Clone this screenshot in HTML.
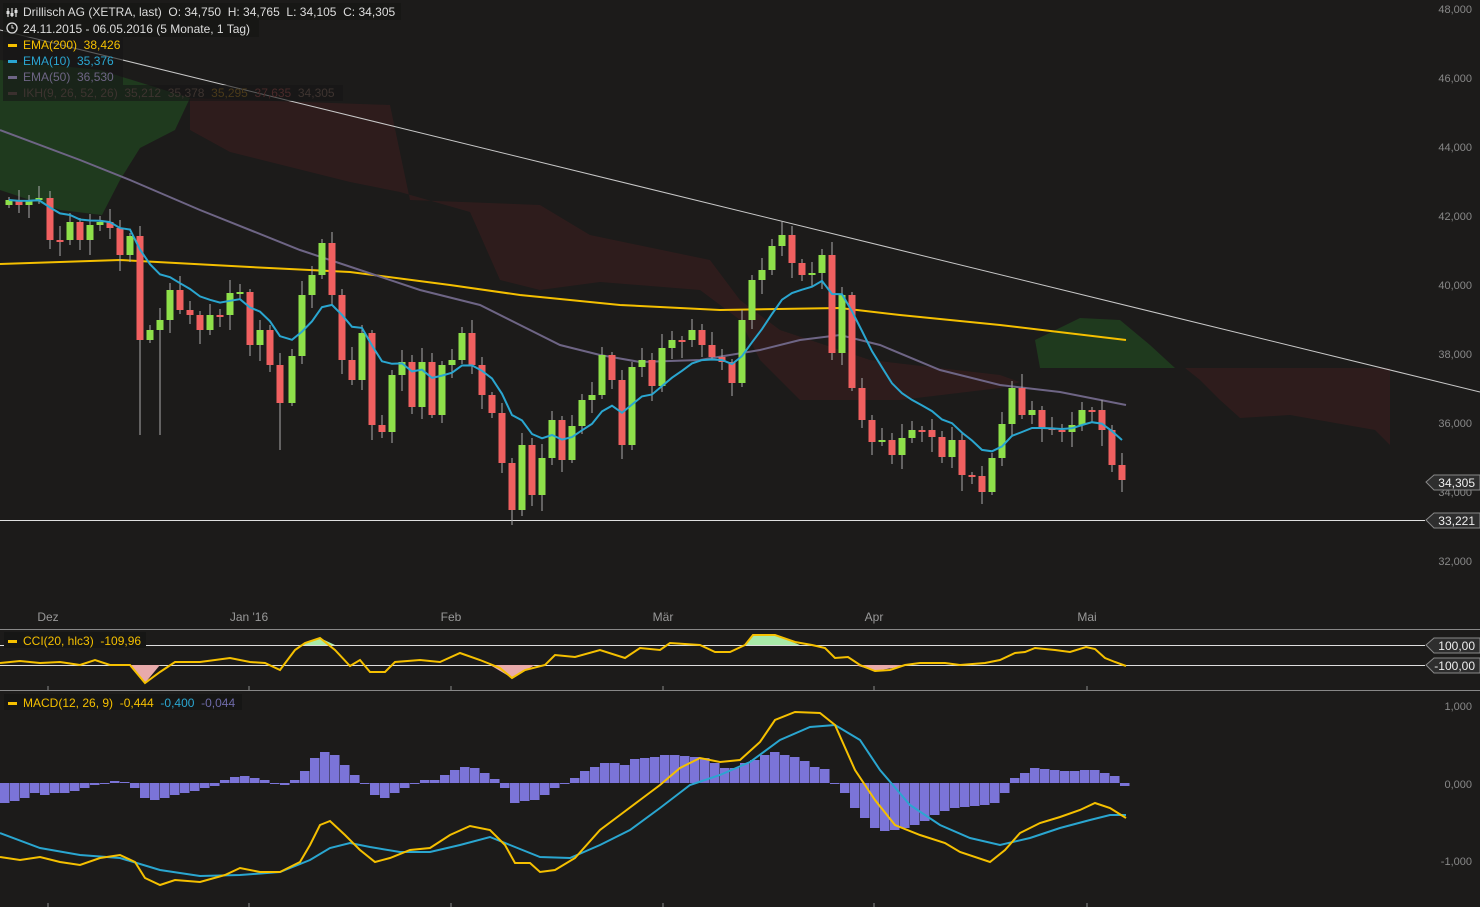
<!DOCTYPE html><html><head><meta charset="utf-8"><style>
html,body{margin:0;background:#1c1b1a;overflow:hidden}
svg{display:block;font-family:"Liberation Sans",sans-serif}
text{white-space:pre}
</style></head><body>
<svg id="s" width="1480" height="907" xmlns="http://www.w3.org/2000/svg">
<rect width="1480" height="907" fill="#1c1b1a"/>
<g id="cloud">
<polygon fill="#1f3a1e" points="0,60 100,70 190,98 175,130 140,148 120,180 102,215 60,210 0,190"/>
<polygon fill="#2e1c1c" points="190,98 390,105 410,200 540,205 590,235 710,260 740,300 780,330 870,360 1000,375 1020,382 1000,388 900,400 800,400 760,360 740,320 700,290 600,282 540,290 500,280 470,212 400,192 350,182 230,152 190,130"/>
<polygon fill="#1f3a1e" points="1035,340 1080,318 1120,320 1150,345 1175,368 1040,368"/>
<polygon fill="#2e1c1c" points="1185,368 1390,368 1390,445 1375,430 1290,415 1240,418 1220,400 1200,380"/>
</g>
<line x1="0" y1="30" x2="1480" y2="392" stroke="#c8c8c8" stroke-width="1"/>
<line x1="0" y1="520.5" x2="1425" y2="520.5" stroke="#e0e0e0" stroke-width="1"/>
<polyline fill="none" stroke="#f5c000" stroke-width="2" points="0,264 120,260 250,267 350,272 450,285 520,295 620,305 720,310 840,308 900,315 1000,325 1126,340"/>
<polyline fill="none" stroke="#6e6585" stroke-width="2" points="0,130 80,160 130,180 200,210 300,250 360,270 420,290 480,305 520,325 560,345 600,355 640,362 700,360 760,350 800,340 840,335 880,345 940,370 1000,385 1060,392 1126,405"/>
<g id="candles"></g>
<polyline id="ema10" fill="none" stroke="#2aa6d0" stroke-width="2"/>
<g fill="#888" font-size="11" text-anchor="end">
<text x="1472" y="13">48,000</text><text x="1472" y="82">46,000</text><text x="1472" y="151">44,000</text><text x="1472" y="220">42,000</text><text x="1472" y="289">40,000</text><text x="1472" y="358">38,000</text><text x="1472" y="427">36,000</text><text x="1472" y="496">34,000</text><text x="1472" y="565">32,000</text>
</g>
<g fill="#2e2e2e" stroke="#888"><polygon points="1426,482 1434,475 1480,475 1480,490 1434,490"/><polygon points="1426,520 1434,513 1480,513 1480,528 1434,528"/>
<polygon points="1426,645 1434,638 1480,638 1480,653 1434,653"/><polygon points="1426,665 1434,658 1480,658 1480,673 1434,673"/></g>
<g fill="#eee" font-size="12" text-anchor="end"><text x="1475" y="487">34,305</text><text x="1475" y="525">33,221</text><text x="1475" y="650">100,00</text><text x="1475" y="670">-100,00</text></g>
<g fill="#999" font-size="12" text-anchor="middle"><text x="48" y="621">Dez</text><text x="249" y="621">Jan '16</text><text x="451" y="621">Feb</text><text x="663" y="621">Mär</text><text x="874" y="621">Apr</text><text x="1087" y="621">Mai</text></g>
<line x1="0" y1="629.5" x2="1480" y2="629.5" stroke="#888"/>
<line x1="0" y1="690.5" x2="1480" y2="690.5" stroke="#888"/>
<line x1="0" y1="645.5" x2="1425" y2="645.5" stroke="#ddd"/>
<line x1="0" y1="665.5" x2="1425" y2="665.5" stroke="#ddd"/>
<polygon fill="#a8eaa8" points="300,645 320,638 335,645"/>
<polygon fill="#a8eaa8" points="745,645 753,635 775,635 800,645"/>
<polygon fill="#e8aaaa" points="130,665 145,683 160,665"/><polygon fill="#e8aaaa" points="490,665 512,678 535,665"/><polygon fill="#e8aaaa" points="855,665 875,671 910,665"/>
<polyline fill="none" stroke="#f5c000" stroke-width="2" points="0,663 20,661 40,663 60,662 80,665 95,660 110,665 130,665 145,683 160,672 175,662 200,662 230,658 250,662 265,663 280,670 295,650 305,643 320,638 335,650 350,666 360,660 370,672 385,672 395,662 420,660 440,662 460,653 480,660 500,668 512,678 525,670 545,665 555,655 575,657 600,650 625,658 640,648 660,650 670,643 700,645 715,652 730,652 745,645 753,635 775,635 795,642 812,645 825,648 835,658 848,657 860,665 875,671 890,670 905,665 920,663 945,663 960,665 985,663 1000,660 1015,653 1025,652 1035,648 1055,650 1070,652 1086,647 1095,649 1105,658 1115,662 1126,666"/>
<g font-size="12"><rect x="4" y="632" width="142" height="16" fill="#161615"/><rect x="8" y="640" width="9" height="3" fill="#f5c000"/><text x="23" y="645" fill="#f5c000">CCI(20, hlc3)  -109,96</text></g>
<g fill="#888" font-size="11" text-anchor="end"><text x="1472" y="710">1,000</text><text x="1472" y="788">0,000</text><text x="1472" y="865">-1,000</text></g>
<g id="hist" fill="#7b74d8"></g>
<polyline fill="none" stroke="#2aa6d0" stroke-width="2" points="0,833 40,848 80,855 120,858 160,870 200,876 240,875 280,872 310,860 330,848 350,843 370,847 400,852 430,852 460,845 490,837 510,845 540,857 570,858 600,845 630,830 660,808 690,785 720,775 750,762 780,740 810,727 835,725 860,740 880,770 910,805 940,825 970,838 1000,845 1030,838 1060,828 1090,820 1110,815 1126,815"/>
<polyline fill="none" stroke="#f5c000" stroke-width="2" points="0,857 20,860 40,857 60,862 80,865 100,858 120,855 135,862 145,878 160,885 175,880 200,882 225,875 240,868 260,872 280,872 300,862 310,845 320,825 330,821 345,835 360,850 375,862 390,858 410,850 430,848 450,835 470,826 490,830 505,845 515,863 530,863 540,872 555,870 575,858 600,830 620,815 640,800 660,785 680,768 700,758 720,762 740,760 760,742 775,720 795,712 820,713 835,725 855,770 875,800 895,825 920,835 945,843 960,852 990,862 1005,850 1020,833 1040,823 1060,817 1080,810 1095,803 1110,808 1126,818"/>
<g font-size="12"><rect x="4" y="694" width="238" height="16" fill="#161615"/><rect x="8" y="702" width="9" height="3" fill="#f5c000"/><text x="23" y="707" fill="#f5c000">MACD(12, 26, 9)  <tspan fill="#f5c000">-0,444</tspan>  <tspan fill="#2aa6d0">-0,400</tspan>  <tspan fill="#6e6aa8">-0,044</tspan></text></g>
<g stroke="#888"><line x1="48" y1="686" x2="48" y2="690"/><line x1="249" y1="686" x2="249" y2="690"/><line x1="451" y1="686" x2="451" y2="690"/><line x1="663" y1="686" x2="663" y2="690"/><line x1="874" y1="686" x2="874" y2="690"/><line x1="1087" y1="686" x2="1087" y2="690"/>
<line x1="48" y1="903" x2="48" y2="907"/><line x1="249" y1="903" x2="249" y2="907"/><line x1="451" y1="903" x2="451" y2="907"/><line x1="663" y1="903" x2="663" y2="907"/><line x1="874" y1="903" x2="874" y2="907"/><line x1="1087" y1="903" x2="1087" y2="907"/></g>
<g font-size="12">
<rect x="3" y="3" width="398" height="17" fill="#161615" opacity=".85"/>
<rect x="3" y="20" width="256" height="17" fill="#161615" opacity=".85"/>
<rect x="3" y="37" width="120" height="48" fill="#161615" opacity=".6"/>
<rect x="3" y="85" width="340" height="16" fill="#161615" opacity=".6"/>
<g stroke="#ddd" stroke-width="1.2"><line x1="8" y1="8" x2="8" y2="17"/><line x1="12" y1="8" x2="12" y2="17"/><line x1="16" y1="8" x2="16" y2="17"/></g>
<g fill="#ddd"><rect x="6.5" y="11" width="3" height="3"/><rect x="10.5" y="13" width="3" height="3"/><rect x="14.5" y="10" width="3" height="3"/></g>
<text x="23" y="16" fill="#ddd">Drillisch AG (XETRA, last)  O: 34,750  H: 34,765  L: 34,105  C: 34,305</text>
<circle cx="12" cy="28" r="5" fill="none" stroke="#ddd" stroke-width="1.3"/><path d="M12 25v3h2" stroke="#ddd" fill="none"/>
<text x="23" y="33" fill="#ddd">24.11.2015 - 06.05.2016 (5 Monate, 1 Tag)</text>
<rect x="8" y="44" width="9" height="3" fill="#f5c000"/><text x="23" y="49" fill="#f5c000">EMA(200)  38,426</text>
<rect x="8" y="60" width="9" height="3" fill="#2aa6d0"/><text x="23" y="65" fill="#2aa6d0">EMA(10)  35,376</text>
<rect x="8" y="76" width="9" height="3" fill="#6e6585"/><text x="23" y="81" fill="#6e6585">EMA(50)  36,530</text>
<rect x="8" y="92" width="9" height="3" fill="#3a302e"/><text x="23" y="97" fill="#3e3430">IKH(9, 26, 52, 26)  35,212  35,378  <tspan fill="#4a3a1a">35,295</tspan>  <tspan fill="#4a2a2a">37,635</tspan>  34,305</text>
</g>
</svg>
<script>
var P=[[7,200],[17,205],[27,200],[37,198],[48,240],[58,240],[68,222],[78,240],[88,225],[98,222],[108,228],[118,255],[128,236],[138,340],[148,330],[158,320],[168,290],[178,310],[188,315],[198,330],[208,315],[218,315],[228,293],[238,292],[248,345],[258,330],[268,365],[278,403],[290,356],[300,295],[310,275],[320,243],[330,295],[340,360],[350,380],[360,333],[370,425],[380,432],[390,375],[400,362],[410,407],[420,362],[430,415],[440,365],[450,360],[460,333],[470,365],[480,395],[490,413],[500,463],[510,510],[520,445],[530,495],[540,458],[550,420],[560,460],[570,426],[580,400],[590,395],[600,355],[610,380],[620,445],[630,367],[640,360],[650,386],[660,348],[670,340],[680,340],[690,330],[700,345],[710,357],[720,362],[730,383],[740,320],[750,280],[760,270],[770,246],[780,235],[790,263],[800,275],[810,273],[820,255],[830,353],[840,295],[850,388],[860,420],[870,442],[880,440],[890,455],[900,438],[910,430],[920,430],[930,437],[940,457],[950,440],[960,475],[970,476],[980,492],[990,458],[1000,424],[1010,388],[1020,415],[1030,410],[1040,428],[1050,430],[1060,432],[1070,425],[1080,410],[1090,410],[1100,430],[1110,465],[1120,480]];
var g=document.getElementById('candles'),h='',prev=205,e=P[0][1],pts=[];
for(var i=0;i<P.length;i++){var x=P[i][0]+2,c=P[i][1],o=prev,up=c<o;var t=Math.min(o,c),b=Math.max(o,c);if(b-t<2)b=t+2;
var wt=t-(3+(i*7)%12),wb=b+(3+(i*5)%14);if(i==13||i==15)wb=435;if(i==27)wb=450;
h+='<line x1="'+x+'" y1="'+wt+'" x2="'+x+'" y2="'+wb+'" stroke="#aaa" stroke-width="1"/>';
h+='<rect x="'+(x-3.5)+'" y="'+t+'" width="7" height="'+(b-t)+'" fill="'+(up?'#8ee04a':'#f06060')+'"/>';
prev=c;e=e+(c-e)*2/11;pts.push(x+','+e.toFixed(1));}
g.innerHTML=h;document.getElementById('ema10').setAttribute('points',pts.join(' '));
var H=[[0,20],[10,18],[20,15],[30,10],[40,12],[50,10],[60,10],[70,8],[80,5],[90,2],[100,1],[110,-2],[120,-1],[130,5],[140,15],[150,17],[160,15],[170,12],[180,10],[190,8],[200,5],[210,3],[220,-3],[230,-6],[240,-7],[250,-5],[260,-3],[270,0],[280,2],[290,-3],[300,-12],[310,-25],[320,-31],[330,-28],[340,-18],[350,-8],[360,0],[370,12],[380,15],[390,10],[400,5],[410,1],[420,-3],[430,-3],[440,-8],[450,-13],[460,-16],[470,-15],[480,-10],[490,-4],[500,5],[510,20],[520,18],[530,17],[540,12],[550,5],[560,0],[570,-5],[580,-12],[590,-16],[600,-20],[610,-20],[620,-18],[630,-24],[640,-25],[650,-26],[660,-28],[670,-28],[680,-27],[690,-26],[700,-25],[710,-20],[720,-15],[730,-15],[740,-20],[750,-23],[760,-28],[770,-31],[780,-28],[790,-26],[800,-22],[810,-16],[820,-14],[830,0],[840,10],[850,25],[860,35],[870,45],[880,48],[890,47],[900,45],[910,42],[920,38],[930,32],[940,28],[950,25],[960,24],[970,23],[980,22],[990,20],[1000,10],[1010,-5],[1020,-10],[1030,-15],[1040,-14],[1050,-13],[1060,-12],[1070,-12],[1080,-13],[1090,-13],[1100,-10],[1110,-7],[1120,3]];
var hh='';H.forEach(function(p){var v=p[1];var y=v<0?783+v:783;hh+='<rect x="'+p[0]+'" y="'+y+'" width="9.5" height="'+Math.max(1,Math.abs(v))+'"/>';});
document.getElementById('hist').innerHTML=hh;
</script>
</body></html>
